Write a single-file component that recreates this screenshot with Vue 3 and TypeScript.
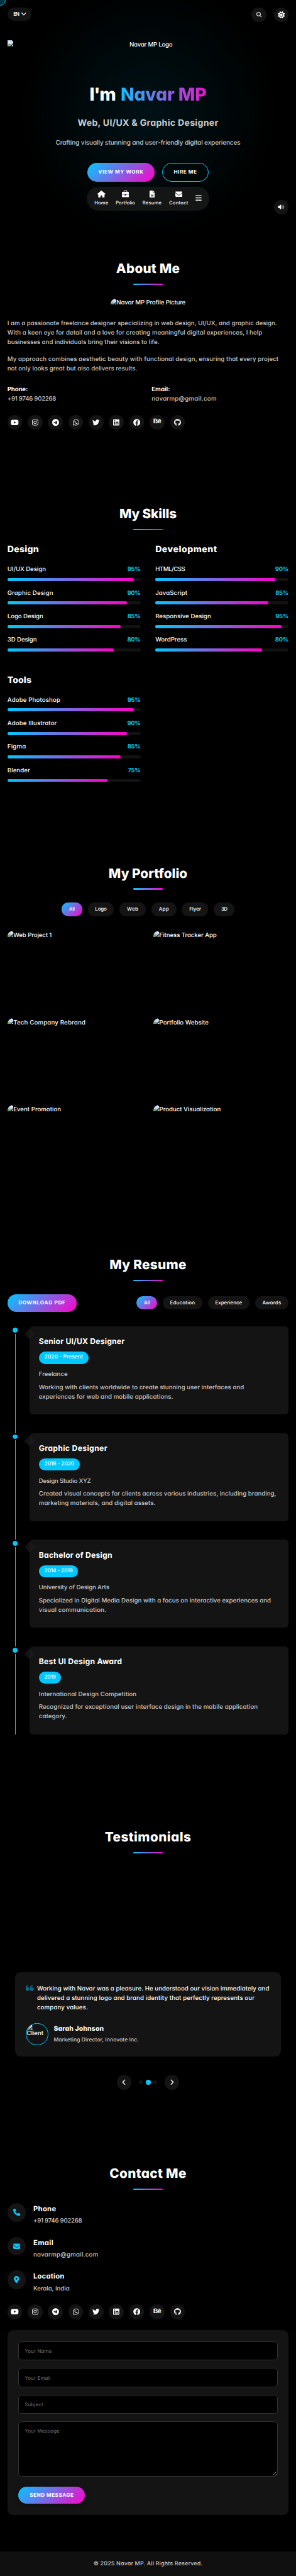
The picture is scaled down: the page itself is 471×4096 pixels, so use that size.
<script setup lang="ts">
import { ref } from 'vue'

interface Icon { w: number; d: string }
interface Label { text: string; w: number }

const icons: Record<string, Icon> = {
  home: { w: 576, d: 'M575.8 255.5c0 18-15 32.1-32 32.1h-32l.7 160.2c0 2.7-.2 5.4-.5 8.1V472c0 22.1-17.9 40-40 40H392c-22.1 0-40-17.9-40-40v-88c0-17.7-14.3-32-32-32h-64c-17.7 0-32 14.3-32 32v88c0 22.1-17.9 40-40 40h-80c-22.1 0-40-17.9-40-40V287.6H32c-18 0-32-14-32-32.1 0-9 3-17 10-24L266.4 8c7-7 15-8 22-8s15 2 21 7l255.4 224.5c8 7 12 15 11 24z' },
  briefcase: { w: 512, d: 'M184 48h144c4.4 0 8 3.6 8 8v40H176V56c0-4.4 3.6-8 8-8zm-56 8v40H64C28.7 96 0 124.7 0 160v96h512v-96c0-35.3-28.7-64-64-64h-64V56c0-30.9-25.1-56-56-56H184c-30.9 0-56 25.1-56 56zM512 288H320v32c0 17.7-14.3 32-32 32h-64c-17.7 0-32-14.3-32-32v-32H0v128c0 35.3 28.7 64 64 64h384c35.3 0 64-28.7 64-64V288z' },
  file: { w: 384, d: 'M64 0C28.7 0 0 28.7 0 64v384c0 35.3 28.7 64 64 64h256c35.3 0 64-28.7 64-64V160H256c-17.7 0-32-14.3-32-32V0H64zm192 0v128h128L256 0zM112 256h160c8.8 0 16 7.2 16 16s-7.2 16-16 16H112c-8.8 0-16-7.2-16-16s7.2-16 16-16zm0 64h160c8.8 0 16 7.2 16 16s-7.2 16-16 16H112c-8.8 0-16-7.2-16-16s7.2-16 16-16zm0 64h160c8.8 0 16 7.2 16 16s-7.2 16-16 16H112c-8.8 0-16-7.2-16-16s7.2-16 16-16z' },
  envelope: { w: 512, d: 'M48 64C21.5 64 0 85.5 0 112c0 15.1 7.1 29.3 19.2 38.4l217.6 163.2c11.4 8.5 27 8.5 38.4 0l217.6-163.2c12.1-9.1 19.2-23.3 19.2-38.4 0-26.5-21.5-48-48-48H48zM0 176v208c0 35.3 28.7 64 64 64h384c35.3 0 64-28.7 64-64V176L294.4 339.2c-22.8 17.1-54 17.1-76.8 0L0 176z' },
  bars: { w: 448, d: 'M0 96c0-17.7 14.3-32 32-32h384c17.7 0 32 14.3 32 32s-14.3 32-32 32H32C14.3 128 0 113.7 0 96zm0 160c0-17.7 14.3-32 32-32h384c17.7 0 32 14.3 32 32s-14.3 32-32 32H32c-17.7 0-32-14.3-32-32zm448 160c0 17.7-14.3 32-32 32H32c-17.7 0-32-14.3-32-32s14.3-32 32-32h384c17.7 0 32 14.3 32 32z' },
  search: { w: 512, d: 'M416 208c0 45.9-14.9 88.3-40 122.7l126.6 126.7c12.5 12.5 12.5 32.8 0 45.3s-32.8 12.5-45.3 0L330.7 376c-34.4 25.2-76.8 40-122.7 40C93.1 416 0 322.9 0 208S93.1 0 208 0s208 93.1 208 208zM208 352a144 144 0 1 0 0-288 144 144 0 1 0 0 288z' },
  sun: { w: 512, d: 'M361.5 1.2c5 2.1 8.6 6.6 9.6 11.9L391 121l107.9 19.8c5.3 1 9.8 4.6 11.9 9.6s1.5 10.7-1.6 15.2L446.9 256l62.3 90.3c3.1 4.5 3.7 10.2 1.6 15.2s-6.6 8.6-11.9 9.6L391 391l-19.9 107.9c-1 5.3-4.6 9.8-9.6 11.9s-10.7 1.5-15.2-1.6L256 446.9l-90.3 62.3c-4.5 3.1-10.2 3.7-15.2 1.6s-8.6-6.6-9.6-11.9L121 391 13.1 371.1c-5.3-1-9.8-4.6-11.9-9.6s-1.5-10.7 1.6-15.2L65.1 256 2.8 165.7c-3.1-4.5-3.7-10.2-1.6-15.2s6.6-8.6 11.9-9.6L121 121l19.9-107.9c1-5.3 4.6-9.8 9.6-11.9s10.7-1.5 15.2 1.6L256 65.1l90.3-62.3c4.5-3.1 10.2-3.7 15.2-1.6zM160 256a96 96 0 1 1 192 0 96 96 0 1 1-192 0zm224 0a128 128 0 1 0-256 0 128 128 0 1 0 256 0z' },
  youtube: { w: 576, d: 'M549.7 124.1c-6.3-23.7-24.8-42.3-48.3-48.6C458.8 64 288 64 288 64S117.2 64 74.6 75.5c-23.5 6.3-42 24.9-48.3 48.6-11.4 42.9-11.4 132.3-11.4 132.3s0 89.4 11.4 132.3c6.3 23.7 24.8 41.5 48.3 47.8C117.2 448 288 448 288 448s170.8 0 213.4-11.5c23.5-6.3 42-24.2 48.3-47.8 11.4-42.9 11.4-132.3 11.4-132.3s0-89.4-11.4-132.3zM232.1 337.6V175.2l142.8 81.2-142.8 81.2z' },
  instagram: { w: 448, d: 'M224.1 141c-63.6 0-114.9 51.3-114.9 114.9s51.3 114.9 114.9 114.9S339 319.5 339 255.9 287.7 141 224.1 141zm0 189.6c-41.1 0-74.7-33.5-74.7-74.7s33.5-74.7 74.7-74.7 74.7 33.5 74.7 74.7-33.6 74.7-74.7 74.7zm146.4-194.3c0 14.9-12 26.8-26.8 26.8-14.9 0-26.8-12-26.8-26.8s12-26.8 26.8-26.8 26.8 12 26.8 26.8zm76.1 27.2c-1.7-35.9-9.9-67.7-36.2-93.9-26.2-26.2-58-34.4-93.9-36.2-37-2.1-147.9-2.1-184.9 0-35.8 1.7-67.6 9.9-93.9 36.1s-34.4 58-36.2 93.9c-2.1 37-2.1 147.9 0 184.9 1.7 35.9 9.9 67.7 36.2 93.9s58 34.4 93.9 36.2c37 2.1 147.9 2.1 184.9 0 35.9-1.7 67.7-9.9 93.9-36.2 26.2-26.2 34.4-58 36.2-93.9 2.1-37 2.1-147.8 0-184.8zM398.8 388c-7.8 19.6-22.9 34.7-42.6 42.6-29.5 11.7-99.5 9-132.1 9s-102.7 2.6-132.1-9c-19.6-7.8-34.7-22.9-42.6-42.6-11.7-29.5-9-99.5-9-132.1s-2.6-102.7 9-132.1c7.8-19.6 22.9-34.7 42.6-42.6 29.5-11.7 99.5-9 132.1-9s102.7-2.6 132.1 9c19.6 7.8 34.7 22.9 42.6 42.6 11.7 29.5 9 99.5 9 132.1s2.7 102.7-9 132.1z' },
  telegram: { w: 496, d: 'M248 8C111 8 0 119 0 256s111 248 248 248 248-111 248-248S385 8 248 8zm115 168.7c-3.7 39.2-19.9 134.4-28.1 178.3-3.5 18.6-10.3 24.8-16.9 25.4-14.4 1.3-25.3-9.5-39.3-18.7-21.8-14.3-34.2-23.2-55.3-37.2-24.5-16.1-8.6-25 5.3-39.5 3.7-3.8 67.1-61.5 68.3-66.7.2-.7.3-3.1-1.2-4.4s-3.6-.8-5.1-.5q-3.3.7-104.6 69.1-14.8 10.2-26.9 9.9c-8.9-.2-25.9-5-38.6-9.1-15.5-5-27.9-7.7-26.8-16.3q.8-6.7 18.5-13.7 108.4-47.2 144.6-62.3c68.9-28.6 83.2-33.6 92.5-33.8 2.1 0 6.6.5 9.6 2.9a10.5 10.5 0 0 1 3.5 6.7 43.8 43.8 0 0 1 .5 9.9z' },
  whatsapp: { w: 448, d: 'M380.9 97.1C339 55.1 283.2 32 223.9 32c-122.4 0-222 99.6-222 222 0 39.1 10.2 77.3 29.6 111L0 480l117.7-30.9c32.4 17.7 68.9 27 106.1 27h.1c122.3 0 224.1-99.6 224.1-222 0-59.3-25.2-115-67.1-157zm-157 341.6c-33.2 0-65.7-8.9-94-25.7l-6.7-4-69.8 18.3L72 359.2l-4.4-7c-18.5-29.4-28.2-63.3-28.2-98.2 0-101.7 82.8-184.5 184.6-184.5 49.3 0 95.6 19.2 130.4 54.1 34.8 34.9 56.2 81.2 56.1 130.5 0 101.8-84.9 184.6-186.6 184.6zm101.2-138.2c-5.5-2.8-32.8-16.2-37.9-18-5.1-1.9-8.8-2.8-12.5 2.8-3.7 5.6-14.3 18-17.6 21.8-3.2 3.7-6.5 4.2-12 1.4-32.6-16.3-54-29.1-75.5-66-5.7-9.8 5.7-9.1 16.3-30.3 1.8-3.7.9-6.9-.5-9.7-1.4-2.8-12.5-30.1-17.1-41.2-4.5-10.8-9.1-9.3-12.5-9.5-3.2-.2-6.9-.2-10.6-.2-3.7 0-9.7 1.4-14.8 6.9-5.1 5.6-19.4 19-19.4 46.3 0 27.3 19.9 53.7 22.6 57.4 2.8 3.7 39.1 59.7 94.8 83.8 35.2 15.2 49 16.5 66.6 13.9 10.7-1.6 32.8-13.4 37.4-26.4 4.6-13 4.6-24.1 3.2-26.4-1.3-2.5-5-3.9-10.5-6.6z' },
  twitter: { w: 512, d: 'M459.4 151.7c.3 4.5.3 9.1.3 13.6 0 138.7-105.6 298.6-298.6 298.6-59.5 0-114.7-17.2-161.1-47.1 8.4 1 16.6 1.3 25.3 1.3 49.1 0 94.2-16.6 130.3-44.8-46.1-1-84.8-31.2-98.1-72.8 6.5 1 13 1.6 19.8 1.6 9.4 0 18.8-1.3 27.6-3.6-48.1-9.7-84.1-52-84.1-103v-1.3c14 7.8 30.2 12.7 47.4 13.3-28.3-18.8-46.8-51-46.8-87.4 0-19.5 5.2-37.4 14.3-53 51.7 63.7 129.3 105.3 216.4 109.8-1.6-7.8-2.6-15.9-2.6-24 0-57.8 46.8-104.9 104.9-104.9 30.2 0 57.5 12.7 76.7 33.1 23.7-4.5 46.5-13.3 66.6-25.3-7.8 24.4-24.4 44.8-46.1 57.8 21.1-2.3 41.6-8.1 60.4-16.2-14.3 20.8-32.2 39.3-52.6 54.3z' },
  linkedin: { w: 448, d: 'M416 32H31.9C14.3 32 0 46.5 0 64.3v383.4C0 465.5 14.3 480 31.9 480H416c17.6 0 32-14.5 32-32.3V64.3c0-17.8-14.4-32.3-32-32.3zM135.4 416H69V202.2h66.5V416zm-33.2-243c-21.3 0-38.5-17.3-38.5-38.5S80.9 96 102.2 96c21.2 0 38.5 17.3 38.5 38.5 0 21.3-17.2 38.5-38.5 38.5zm282.1 243h-66.4V312c0-24.8-.5-56.7-34.5-56.7-34.6 0-39.9 27-39.9 54.9V416h-66.4V202.2h63.7v29.2h.9c8.9-16.8 30.6-34.5 62.9-34.5 67.2 0 79.7 44.3 79.7 101.9V416z' },
  facebook: { w: 512, d: 'M504 256C504 119 393 8 256 8S8 119 8 256c0 123.8 90.7 226.4 209.3 245V327.7h-63V256h63v-54.6c0-62.2 37-96.5 93.7-96.5 27.1 0 55.5 4.8 55.5 4.8v61h-31.3c-30.8 0-40.4 19.1-40.4 38.7V256h68.8l-11 71.7h-57.8V501C413.3 482.4 504 379.8 504 256z' },
  github: { w: 496, d: 'M244.8 8C106.1 8 0 113.3 0 252c0 110.9 69.8 205.8 169.5 239.2 12.8 2.3 17.3-5.6 17.3-12.1 0-6.2-.3-40.4-.3-61.4 0 0-70 15-84.7-29.8 0 0-11.4-29.1-27.8-36.6 0 0-22.9-15.7 1.6-15.4 0 0 24.9 2 38.6 25.8 21.9 38.6 58.6 27.5 72.9 20.9 2.3-16 8.8-27.1 16-33.7-55.9-6.2-112.3-14.3-112.3-110.5 0-27.5 7.6-41.3 23.6-58.9-2.6-6.5-11.1-33.3 2.6-67.9 20.9-6.5 69 27 69 27 20-5.6 41.5-8.5 62.8-8.5s42.8 2.9 62.8 8.5c0 0 48.1-33.6 69-27 13.7 34.7 5.2 61.4 2.6 67.9 16 17.7 25.8 31.5 25.8 58.9 0 96.5-58.9 104.2-114.8 110.5 9.2 7.9 17 22.9 17 46.4 0 33.7-.3 75.4-.3 83.6 0 6.5 4.6 14.4 17.3 12.1C428.2 457.8 496 362.9 496 252 496 113.3 383.5 8 244.8 8z' },
  phone: { w: 512, d: 'M164.9 24.6c-7.7-18.6-28-28.5-47.4-23.2l-88 24C12.1 30.2 0 46 0 64c0 247.4 200.6 448 448 448 18 0 33.8-12.1 38.6-29.5l24-88c5.3-19.4-4.6-39.7-23.2-47.4l-96-40c-16.3-6.8-35.2-2.1-46.3 11.6L304.7 368C234.3 334.7 177.3 277.7 144 207.3l49.3-40.3c13.7-11.2 18.4-30 11.6-46.3l-40-96z' },
  pin: { w: 384, d: 'M215.7 499.2C267 435 384 279.4 384 192 384 86 298 0 192 0S0 86 0 192c0 87.4 117 243 168.3 307.2 12.3 15.3 35.1 15.3 47.4 0zM192 128a64 64 0 1 1 0 128 64 64 0 1 1 0-128z' },
  quote: { w: 448, d: 'M0 216C0 149.7 53.7 96 120 96h8c17.7 0 32 14.3 32 32s-14.3 32-32 32h-8c-30.9 0-56 25.1-56 56v8h64c35.3 0 64 28.7 64 64v64c0 35.3-28.7 64-64 64H64c-35.3 0-64-28.7-64-64V216zm256 0c0-66.3 53.7-120 120-120h8c17.7 0 32 14.3 32 32s-14.3 32-32 32h-8c-30.9 0-56 25.1-56 56v8h64c35.3 0 64 28.7 64 64v64c0 35.3-28.7 64-64 64h-64c-35.3 0-64-28.7-64-64V216z' },
}

const nav = [
  { icon: 'home', text: 'Home', w: 37.5 },
  { icon: 'briefcase', text: 'Portfolio', w: 52 },
  { icon: 'file', text: 'Resume', w: 51.5 },
  { icon: 'envelope', text: 'Contact', w: 51.5 },
]
const aboutFirst: Label[] = [
  { text: 'I am a passionate freelance designer specializing in web design, UI/UX, and graphic design.', w: 729 },
  { text: 'With a keen eye for detail and a love for creating meaningful digital experiences, I help', w: 689 },
  { text: 'businesses and individuals bring their visions to life.', w: 411 },
]
const aboutSecond: Label[] = [
  { text: 'My approach combines aesthetic beauty with functional design, ensuring that every project', w: 733 },
  { text: 'not only looks great but also delivers results.', w: 351 },
]
const socials = ['youtube', 'instagram', 'telegram', 'whatsapp', 'twitter', 'linkedin', 'facebook', 'behance', 'github']
const skillGroups = [
  { name: 'Design', w: 85, items: [
    { text: 'UI/UX Design', w: 104, value: 95 }, { text: 'Graphic Design', w: 123.5, value: 90 },
    { text: 'Logo Design', w: 97, value: 85 }, { text: '3D Design', w: 79.5, value: 80 } ] },
  { name: 'Development', w: 166.5, items: [
    { text: 'HTML/CSS', w: 81, value: 90 }, { text: 'JavaScript', w: 86.5, value: 85 },
    { text: 'Responsive Design', w: 150.5, value: 95 }, { text: 'WordPress', w: 85.5, value: 80 } ] },
  { name: 'Tools', w: 65, items: [
    { text: 'Adobe Photoshop', w: 143, value: 95 }, { text: 'Adobe Illustrator', w: 133.5, value: 90 },
    { text: 'Figma', w: 50, value: 85 }, { text: 'Blender', w: 61, value: 75 } ] },
]
const portfolioFilters: Label[] = [
  { text: 'All', w: 16 }, { text: 'Logo', w: 31.5 }, { text: 'Web', w: 30.5 },
  { text: 'App', w: 27 }, { text: 'Flyer', w: 31.5 }, { text: '3D', w: 17 },
]
const resumeFilters: Label[] = [
  { text: 'All', w: 16 }, { text: 'Education', w: 67 }, { text: 'Experience', w: 72.5 }, { text: 'Awards', w: 50.5 },
]
const projects: Label[] = [
  { text: 'Web Project 1', w: 104 }, { text: 'Fitness Tracker App', w: 155 },
  { text: 'Tech Company Rebrand', w: 195 }, { text: 'Portfolio Website', w: 133 },
  { text: 'Event Promotion', w: 129 }, { text: 'Product Visualization', w: 166 },
]
const resume = [
  { title: 'Senior UI/UX Designer', tw: 232, date: '2020 - Present', dw: 104, place: 'Freelance', pw: 78, lines: [
    { text: 'Working with clients worldwide to create stunning user interfaces and', w: 555 },
    { text: 'experiences for web and mobile applications.', w: 363 } ] },
  { title: 'Graphic Designer', tw: 185, date: '2018 - 2020', dw: 81, place: 'Design Studio XYZ', pw: 141, lines: [
    { text: 'Created visual concepts for clients across various industries, including branding,', w: 642 },
    { text: 'marketing materials, and digital assets.', w: 315.5 } ] },
  { title: 'Bachelor of Design', tw: 198.5, date: '2014 - 2018', dw: 77, place: 'University of Design Arts', pw: 190.5, lines: [
    { text: 'Specialized in Digital Media Design with a focus on interactive experiences and', w: 627.5 },
    { text: 'visual communication.', w: 182 } ] },
  { title: 'Best UI Design Award', tw: 224.5, date: '2019', dw: 31, place: 'International Design Competition', pw: 264, lines: [
    { text: 'Recognized for exceptional user interface design in the mobile application', w: 592 },
    { text: 'category.', w: 76 } ] },
]
const testimonial: Label[] = [
  { text: 'Working with Navar was a pleasure. He understood our vision immediately and', w: 628 },
  { text: 'delivered a stunning logo and brand identity that perfectly represents our', w: 588 },
  { text: 'company values.', w: 137.5 },
]
const contacts = [
  { icon: 'phone', name: 'Phone', nw: 61.5, value: '+91 9746 902268', vw: 132 },
  { icon: 'envelope', name: 'Email', nw: 54, value: 'navarmp@gmail.com', vw: 175.5 },
  { icon: 'pin', name: 'Location', nw: 84, value: 'Kerala, India', vw: 98 },
]
const portfolioFilter = ref('All')
const resumeFilter = ref('All')

// Tracks a single line of text so that it sets to the given width in layout pixels.
const vFit = {
  mounted(el: HTMLElement, binding: { value: number }) {
    const page = el.closest('.page') as HTMLElement
    requestAnimationFrame(() => {
      const scale = page.getBoundingClientRect().width / 800.4
      const count = (el.textContent ?? '').length
      const range = document.createRange()
      range.selectNodeContents(el)
      let spacing = 0
      for (let pass = 0; pass < 3; pass++) {
        const width = range.getBoundingClientRect().width / scale - spacing
        spacing += (binding.value - width) / (count - 1)
        el.style.letterSpacing = `${spacing.toFixed(3)}px`
      }
    })
  },
}
</script>

<template>
  <div class="page">
    <div class="cursor"></div>
    <button class="lang"><span v-fit="16.5">EN</span>
      <svg width="13" height="8" viewBox="0 0 13 8"><path d="M1.2 1.2 6.5 6.6l5.3-5.4" class="stroke" /></svg>
    </button>
    <div class="tools">
      <button class="round"><svg width="14.4" height="14.4" viewBox="0 0 512 512"><path :d="icons.search.d" /></svg></button>
      <button class="round"><svg width="19.2" height="19.2" viewBox="0 0 512 512"><path :d="icons.sun.d" /></svg></button>
    </div>
    <button class="round sound">
      <svg width="18" height="14" viewBox="0 0 18 14"><path d="M1.4 4.3h2.4L8 .7c.5-.4 1.1-.1 1.1.5v11.6c0 .6-.6.9-1.1.5L3.8 9.7H1.4c-.6 0-1-.4-1-1V5.3c0-.6.4-1 1-1z" /><path d="M11 5c1.1 1 1.1 3 0 4M12.7 3.2c2.1 1.9 2.1 5.7 0 7.6M14.4 1.4c3.2 2.8 3.2 8.4 0 11.2" class="wave" /></svg>
    </button>

    <section class="hero">
      <div class="logo">
        <svg class="broken" viewBox="0 0 16 16"><path class="sheet" d="M0 0h11l5 5v2.8L6.8 16H0z" /><path class="fold" d="M11 0v5h5z" /><ellipse class="fold" cx="5" cy="6" rx="3" ry="1.7" /><path class="hill" d="M1 15v-2.2c2.2-3.3 5.5-4 8.6-1.5L5.8 15z" /><path class="sheet" d="M16 10.6V16H9.9z" /></svg>
        <span class="logo-alt"><span v-fit="116.5">Navar MP Logo</span></span>
      </div>
      <h1><span v-fit="71.5">I'm</span><span class="gradient-text" v-fit="232">Navar MP</span></h1>
      <h2 class="role"><span v-fit="380">Web, UI/UX &amp; Graphic Designer</span></h2>
      <p class="lead"><span v-fit="500">Crafting visually stunning and user-friendly digital experiences</span></p>
      <div class="actions">
        <a class="btn work"><span v-fit="122">VIEW MY WORK</span></a>
        <a class="btn outline"><span v-fit="62">HIRE ME</span></a>
      </div>
      <nav class="dock">
        <a v-for="n in nav" :key="n.text" class="dock-item">
          <svg height="19.2" :width="icons[n.icon].w * 0.0375" :viewBox="`0 0 ${icons[n.icon].w} 512`"><path :d="icons[n.icon].d" /></svg>
          <span class="dock-label"><span v-fit="n.w">{{ n.text }}</span></span>
        </a>
        <svg class="bars" width="16.8" height="19.2" viewBox="0 0 448 512"><path :d="icons.bars.d" /></svg>
      </nav>
    </section>

    <section class="about">
      <h2 class="title"><span v-fit="172">About Me</span></h2>
      <div class="portrait">
        <svg class="broken oval" viewBox="0 0 16 16"><path class="sheet" d="M0 0h11l5 5v2.8L6.8 16H0z" /><path class="fold" d="M11 0v5h5z" /><path class="hill" d="M0 16v-3.2c2.2-3.3 6.5-4 9.6-1.5L5.8 16z" /><path class="sheet" d="M16 10.6V16H9.9z" /></svg>
        <span v-fit="187">Navar MP Profile Picture</span>
      </div>
      <p class="copy"><span v-for="l in aboutFirst" :key="l.text" class="line"><span v-fit="l.w">{{ l.text }}</span></span></p>
      <p class="copy second"><span v-for="l in aboutSecond" :key="l.text" class="line"><span v-fit="l.w">{{ l.text }}</span></span></p>
      <div class="facts">
        <div><div class="strong"><span v-fit="55">Phone:</span></div><div><span v-fit="132">+91 9746 902268</span></div></div>
        <div><div class="strong"><span v-fit="49.5">Email:</span></div><div><span v-fit="175.5">navarmp@gmail.com</span></div></div>
      </div>
      <div class="socials">
        <a v-for="s in socials" :key="s" class="round">
          <span v-if="s === 'behance'" class="be">Bē</span>
          <svg v-else height="19.2" :width="icons[s].w * 0.0375" :viewBox="`0 0 ${icons[s].w} 512`"><path :d="icons[s].d" /></svg>
        </a>
      </div>
    </section>

    <section class="skills">
      <h2 class="title"><span v-fit="155">My Skills</span></h2>
      <div class="skill-grid">
        <div v-for="g in skillGroups" :key="g.name">
          <h3><span v-fit="g.w">{{ g.name }}</span></h3>
          <div v-for="s in g.items" :key="s.text" class="skill">
            <div class="skill-head"><span v-fit="s.w">{{ s.text }}</span><span class="pct">{{ s.value }}%</span></div>
            <div class="track"><div class="fill" :style="{ width: s.value + '%' }"></div></div>
          </div>
        </div>
      </div>
    </section>

    <section class="portfolio">
      <h2 class="title"><span v-fit="213">My Portfolio</span></h2>
      <div class="filters">
        <button v-for="f in portfolioFilters" :key="f.text" class="chip" :class="{ active: f.text === portfolioFilter }" @click="portfolioFilter = f.text"><span v-fit="f.w">{{ f.text }}</span></button>
      </div>
      <div class="projects">
        <div v-for="p in projects" :key="p.text" class="project">
          <svg class="broken" viewBox="0 0 16 16"><path class="sheet" d="M0 0h11l5 5v2.8L6.8 16H0z" /><path class="fold" d="M11 0v5h5z" /><path class="hill" d="M0 16v-3.2c2.2-3.3 6.5-4 9.6-1.5L5.8 16z" /><path class="sheet" d="M16 10.6V16H9.9z" /></svg>
          <span v-fit="p.w">{{ p.text }}</span>
        </div>
      </div>
    </section>

    <section class="resume">
      <h2 class="title"><span v-fit="208">My Resume</span></h2>
      <div class="resume-bar">
        <a class="btn download"><span v-fit="127">DOWNLOAD PDF</span></a>
        <div class="filters right">
          <button v-for="f in resumeFilters" :key="f.text" class="chip" :class="{ active: f.text === resumeFilter }" @click="resumeFilter = f.text"><span v-fit="f.w">{{ f.text }}</span></button>
        </div>
      </div>
      <div class="timeline">
        <div v-for="r in resume" :key="r.title" class="entry">
          <div class="entry-title"><span v-fit="r.tw">{{ r.title }}</span></div>
          <div class="badge"><span v-fit="r.dw">{{ r.date }}</span></div>
          <div class="place"><span v-fit="r.pw">{{ r.place }}</span></div>
          <p><span v-for="l in r.lines" :key="l.text" class="line"><span v-fit="l.w">{{ l.text }}</span></span></p>
        </div>
      </div>
    </section>

    <section class="testimonials">
      <h2 class="title"><span v-fit="233">Testimonials</span></h2>
      <div class="review">
        <div class="review-text">
          <svg class="quote" width="21" height="24" viewBox="0 0 448 512"><path :d="icons.quote.d" /></svg>
          <p><span v-for="l in testimonial" :key="l.text" class="line"><span v-fit="l.w">{{ l.text }}</span></span></p>
        </div>
        <div class="author">
          <div class="avatar">
            <svg class="broken" viewBox="0 0 16 16"><path class="sheet" d="M0 0h11l5 5v2.8L6.8 16H0z" /><path class="fold" d="M11 0v5h5z" /><path class="hill" d="M0 16v-3.2c2.2-3.3 6.5-4 9.6-1.5L5.8 16z" /><path class="sheet" d="M16 10.6V16H9.9z" /></svg>
            <span class="avatar-alt"><span v-fit="45.5">Client</span></span>
          </div>
          <div class="author-text">
            <div class="author-name"><span v-fit="135.5">Sarah Johnson</span></div>
            <div class="author-role"><span v-fit="230">Marketing Director, Innovate Inc.</span></div>
          </div>
        </div>
      </div>
      <div class="pager">
        <button class="round"><svg width="10" height="16" viewBox="0 0 10 16"><path d="M8 2 2 8l6 6" class="stroke" /></svg></button>
        <div class="dots"><i></i><i class="on"></i><i></i></div>
        <button class="round"><svg width="10" height="16" viewBox="0 0 10 16"><path d="m2 2 6 6-6 6" class="stroke" /></svg></button>
      </div>
    </section>

    <section class="contact">
      <h2 class="title"><span v-fit="207.5">Contact Me</span></h2>
      <div class="contact-list">
        <div v-for="c in contacts" :key="c.name" class="contact-row">
          <div class="contact-icon"><svg height="19.2" :width="icons[c.icon].w * 0.0375" :viewBox="`0 0 ${icons[c.icon].w} 512`"><path :d="icons[c.icon].d" /></svg></div>
          <div>
            <div class="contact-name"><span v-fit="c.nw">{{ c.name }}</span></div>
            <div class="contact-value"><span v-fit="c.vw">{{ c.value }}</span></div>
          </div>
        </div>
      </div>
      <div class="socials">
        <a v-for="s in socials" :key="s" class="round">
          <span v-if="s === 'behance'" class="be">Bē</span>
          <svg v-else height="19.2" :width="icons[s].w * 0.0375" :viewBox="`0 0 ${icons[s].w} 512`"><path :d="icons[s].d" /></svg>
        </a>
      </div>
      <form class="form" @submit.prevent>
        <input type="text" placeholder="Your Name" />
        <input type="email" placeholder="Your Email" />
        <input type="text" placeholder="Subject" />
        <textarea placeholder="Your Message"></textarea>
        <button class="btn send"><span v-fit="118.5">SEND MESSAGE</span></button>
      </form>
    </section>

    <footer><span v-fit="294.5">© 2025 Navar MP. All Rights Reserved.</span></footer>
  </div>
</template>

<style>
html, body { margin: 0; background: #000; overflow-x: hidden; }
</style>

<style scoped>
.page {
  --cyan: #00c8ff;
  --card: #141414;
  --muted: #cccccc;
  --grad: linear-gradient(135deg, #00c8ff, #ff00c8);
  position: relative;
  zoom: 0.58844;
  width: 800.4px;
  height: 6961px;
  overflow: hidden;
  background: #000;
  color: #fff;
  font: 450 16.4px/25.6px Inter, "Open Sans", "Liberation Sans", sans-serif;
  font-feature-settings: "cv11" 1;
  text-rendering: geometricPrecision;
  white-space: nowrap;
}
.page *, .page *::before, .page *::after { box-sizing: border-box; }
h1, h2, h3, p { margin: 0; }
button { border: 0; padding: 0; color: inherit; font: inherit; text-rendering: inherit; }
svg { display: block; fill: currentColor; flex: none; }
.stroke { fill: none; stroke: currentColor; stroke-width: 2.2; stroke-linecap: round; stroke-linejoin: round; }
.wave { fill: none; stroke: currentColor; stroke-width: 1; stroke-linecap: round; }
.line { display: block; }

.cursor { position: absolute; z-index: 3; left: -15px; top: -15px; width: 30px; height: 30px; border: 2px solid var(--cyan); border-radius: 50%; background: rgba(0, 200, 255, 0.25); }
.lang { position: absolute; z-index: 2; left: 20px; top: 20px; width: 65px; height: 36px; display: flex; align-items: center; gap: 6px; padding-left: 15px; border-radius: 20px; background: var(--card); font-size: 14px; font-weight: 600; }
.lang span { width: 16.5px; }
.tools { position: absolute; z-index: 2; right: 20px; top: 20px; display: flex; gap: 20px; }
.sound { position: absolute; z-index: 2; right: 20px; top: 540px; }
.round { width: 40px; height: 40px; flex: none; display: flex; align-items: center; justify-content: center; border-radius: 50%; background: var(--card); }

section { padding: 80px 20px 0; }
.title { position: relative; height: 72px; padding-top: 0.8px; text-align: center; font-size: 35.2px; line-height: 56px; font-weight: 800; }
.title::after { content: ""; position: absolute; left: 50%; bottom: 0; width: 80px; height: 4px; margin-left: -40px; border-radius: 2px; background: linear-gradient(90deg, #00c8ff, #ff00c8); }
.btn { display: flex; align-items: center; justify-content: center; border-radius: 50px; background: var(--grad); color: #fff; font-size: 14px; font-weight: 700; }

.hero { height: 618.5px; padding-top: 109.2px; background: radial-gradient(circle at 400px 300px, rgba(0, 200, 255, 0.09) 0, rgba(0, 200, 255, 0) 350px); }
.logo { display: flex; height: 118px; }
.logo-alt { flex: 1; text-align: center; }
.broken { width: 16px; height: 16px; }
.sheet { fill: #c8d5f2; }
.fold { fill: #f4f7fd; }
.hill { fill: #67a84f; }
h1 { display: flex; justify-content: center; gap: 14.5px; font-size: 48px; line-height: 57.6px; font-weight: 800; }
.gradient-text { background: linear-gradient(90deg, #14bdff, #e915cf); -webkit-background-clip: text; background-clip: text; color: transparent; }
.role { margin-top: 29.6px; text-align: center; font-size: 24px; line-height: 38.4px; font-weight: 700; color: var(--muted); }
.lead { margin-top: 20px; text-align: center; font-size: 17px; line-height: 28px; color: var(--muted); }
.actions { display: flex; justify-content: center; gap: 20px; margin-top: 39px; }
.work { width: 182px; height: 51px; }
.outline { width: 126px; height: 51px; background: none; border: 2px solid var(--cyan); }
.dock { display: flex; gap: 20px; width: 330px; height: 65px; margin: 14px auto 0; padding: 10px 20px 0; border-radius: 33px; background: rgba(21, 22, 22, 0.95); }
.dock-item { display: flex; flex-direction: column; align-items: center; gap: 5px; }
.dock-label { font-size: 12.8px; line-height: 20.5px; }
.bars { margin-top: 10px; }

.about { height: 662.2px; }
.portrait { display: flex; justify-content: center; margin-top: 35.6px; }
.oval { border-radius: 14px 0 0 0; margin-top: 1px; }
.copy { margin-top: 30.6px; color: var(--muted); }
.copy.second { margin-top: 19.8px; }
.facts { display: grid; grid-template-columns: 370px 370px; gap: 20px; margin-top: 30.2px; color: var(--muted); }
.strong { color: #fff; font-weight: 700; }
.socials { display: flex; gap: 15px; margin-top: 29.5px; }
.be { font: 700 18px/20px "Liberation Sans", Arial, sans-serif; letter-spacing: -1px; }

.skills { height: 971.3px; }
.skill-grid { display: grid; grid-template-columns: 360px 360px; gap: 39.2px 40px; margin-top: 34.4px; }
h3 { margin-bottom: 20.9px; font-size: 24px; line-height: 38.4px; font-weight: 800; }
.skill { height: 63.5px; }
.skill-head { display: flex; justify-content: space-between; margin-bottom: 10px; font-weight: 550; }
.pct { color: var(--cyan); font-size: 16px; font-weight: 650; letter-spacing: -0.5px; }
.track { height: 8px; border-radius: 4px; background: #121212; }
.fill { height: 8px; border-radius: 4px; background: linear-gradient(90deg, #00c8ff, #ff00c8); }

.portfolio { height: 1057.8px; }
.filters { display: flex; justify-content: center; gap: 15px; margin-top: 35.3px; }
.filters.right { margin: 0; }
.chip { height: 36px; padding: 0 20px; border-radius: 18px; background: var(--card); font-size: 13.5px; font-weight: 550; line-height: 36px; }
.chip.active { background: var(--grad); }
.projects { display: grid; grid-template-columns: 365px 365px; grid-auto-rows: 205.5px; gap: 30px; margin-top: 40.4px; }
.project { display: flex; overflow: hidden; border-radius: 15px; }

.resume { height: 1546.2px; }
.resume-bar { display: flex; align-items: center; justify-content: space-between; height: 47.3px; margin-top: 35.5px; }
.download { width: 187.5px; height: 47.3px; }
.timeline { position: relative; display: flex; flex-direction: column; gap: 50.2px; margin-top: 39.8px; padding-left: 60px; }
.timeline::before { content: ""; position: absolute; left: 20px; top: 0; bottom: 0; width: 2px; background: var(--cyan); }
.entry { position: relative; height: 238px; padding: 24.4px 25px 0; border-radius: 10px; background: var(--card); }
.entry::before { content: ""; position: absolute; left: -49px; top: 0; width: 20px; height: 20px; border: 4px solid #000; border-radius: 50%; background: var(--cyan); background-clip: padding-box; }
.entry::after { content: ""; position: absolute; left: -10px; top: 10.5px; width: 20px; height: 20px; transform: rotate(45deg); background: rgba(30, 30, 30, 0.6); }
.entry-title { font-size: 20.8px; line-height: 33.3px; font-weight: 750; }
.badge { display: inline-block; height: 32.7px; margin-top: 10.9px; padding: 0 15px; border-radius: 17px; background: var(--cyan); font-size: 14.4px; line-height: 33px; font-weight: 500; vertical-align: top; }
.place { margin-top: 16.2px; color: var(--muted); }
.entry p { margin-top: 8.9px; color: var(--muted); }

.testimonials { height: 910px; }
.review { width: 720px; height: 226.6px; margin: 322px auto 0; padding: 31px 30px 0; border-radius: 15px; background: var(--card); }
.review-text { display: flex; gap: 9px; }
.quote { margin-top: -1.4px; color: #0a6e8a; }
.author { display: flex; gap: 15px; margin-top: 29px; }
.avatar { width: 60px; height: 60px; overflow: hidden; border: 3px solid var(--cyan); border-radius: 50%; padding-top: 1px; }
.avatar-alt { display: block; line-height: 21px; }
.author-text { padding-top: 1.5px; }
.author-name { font-size: 17.6px; line-height: 28.2px; font-weight: 800; }
.author-role { margin-top: 6.2px; font-size: 14.4px; line-height: 23px; color: var(--muted); }
.pager { display: flex; align-items: center; justify-content: center; gap: 20px; margin-top: 50.4px; }
.dots { display: flex; gap: 10px; }
.dots i { width: 10px; height: 10px; border-radius: 50%; background: var(--card); }
.dots .on { background: var(--cyan); transform: scale(1.35); }

.contact { height: 1129px; }
.contact-list { display: flex; flex-direction: column; gap: 29px; margin-top: 35.5px; }
.contact-row { display: flex; gap: 20px; height: 62px; }
.contact-icon { width: 50px; height: 50px; display: flex; align-items: center; justify-content: center; border-radius: 50%; background: var(--card); color: var(--cyan); }
.contact-name { font-size: 19.2px; line-height: 30.7px; font-weight: 750; }
.contact-value { margin-top: 5.5px; color: var(--muted); }
.form { display: flex; flex-direction: column; height: 498.8px; margin-top: 30px; padding: 30px; border-radius: 15px; background: var(--card); }
input, textarea { display: block; width: 100%; height: 52px; margin: 0 0 20px; padding: 15px; border: 1px solid #333; border-radius: 10px; outline: 0; background: #000; color: #fff; font: 400 13.33px/20px Inter, "Liberation Sans", sans-serif; font-feature-settings: "cv11" 1; letter-spacing: 0.37px; text-rendering: inherit; }
input::placeholder, textarea::placeholder { color: #757575; opacity: 1; }
textarea { height: 150px; margin-bottom: 27px; resize: vertical; }
.send { width: 180px; height: 46.3px; box-shadow: 0 5px 15px rgba(0, 0, 0, 0.35); }

footer { height: 66px; padding-top: 1px; line-height: 66px; text-align: center; background: #101010; color: var(--muted); font-size: 15.2px; }
</style>
